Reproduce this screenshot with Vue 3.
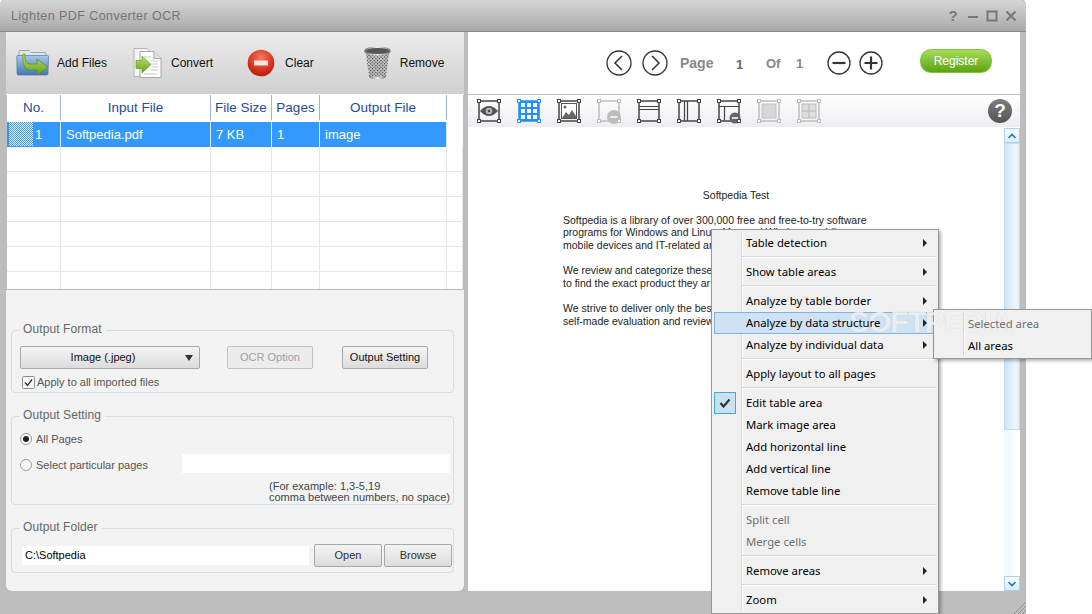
<script setup>
const columns = ['No.', 'Input File', 'File Size', 'Pages', 'Output File', '']
const emptyRows = [1, 2, 3, 4, 5, 6]
const tools = [
  { kind: 'eye', color: '#444' },
  { kind: 'grid', color: '#1e90ff' },
  { kind: 'image', color: '#444' },
  { kind: 'minus', color: '#bdbdbd' },
  { kind: 'rows', color: '#444' },
  { kind: 'cols', color: '#444' },
  { kind: 'rowminus', color: '#444' },
  { kind: 'fill', color: '#bdbdbd' },
  { kind: 'quad', color: '#bdbdbd' }
]
const corners = [[2, 2], [22, 2], [2, 22], [22, 22]]
const menu = [
  { t: 'Table detection', sub: true }, { sep: true },
  { t: 'Show table areas', sub: true }, { sep: true },
  { t: 'Analyze by table border', sub: true },
  { t: 'Analyze by data structure', sub: true, hot: true },
  { t: 'Analyze by individual data', sub: true }, { sep: true },
  { t: 'Apply layout to all pages' }, { sep: true },
  { t: 'Edit table area', check: true },
  { t: 'Mark image area' },
  { t: 'Add horizontal line' },
  { t: 'Add vertical line' },
  { t: 'Remove table line' }, { sep: true },
  { t: 'Split cell', off: true },
  { t: 'Merge cells', off: true }, { sep: true },
  { t: 'Remove areas', sub: true }, { sep: true },
  { t: 'Zoom', sub: true }
]
</script>

<template>
  <div class="screen">
    <div class="window">
      <header class="titlebar">
        <span class="title">Lighten PDF Converter OCR</span>
        <div class="winctl">
          <span class="q">?</span>
          <svg width="14" height="14" viewBox="0 0 14 14"><path d="M2 8h10" stroke="#777" stroke-width="2"/></svg>
          <svg width="14" height="14" viewBox="0 0 14 14"><rect x="2.5" y="2.5" width="9" height="9" fill="none" stroke="#777" stroke-width="2"/></svg>
          <svg width="14" height="14" viewBox="0 0 14 14"><path d="M2.5 2.5l9 9M11.5 2.5l-9 9" stroke="#777" stroke-width="2"/></svg>
        </div>
      </header>

      <div class="body">
        <section class="left">
          <div class="actions">
            <div class="action a1">
              <svg width="34" height="28" viewBox="0 0 34 28">
                <defs>
                  <linearGradient id="fold" x1="0" y1="0" x2="0" y2="1"><stop offset="0" stop-color="#a9c9e6"/><stop offset="1" stop-color="#3f77b5"/></linearGradient>
                  <linearGradient id="grn" x1="0" y1="0" x2="0" y2="1"><stop offset="0" stop-color="#c6e26a"/><stop offset="1" stop-color="#5f9e1e"/></linearGradient>
                </defs>
                <path d="M3 5V2.5Q3 1.5 4 1.5h9l2 2h14q1 0 1 1V8H3z" fill="#dfe6ea" stroke="#8a98a4" stroke-width=".8"/>
                <path d="M1.5 6.5h30q1 0 1 1l-.5 17q0 1.5-1.500 1.500h-28Q1 26 1 24.500L.8 7.500q0-1 .7-1z" fill="url(#fold)" stroke="#55789c" stroke-width=".7"/>
                <path d="M9 5c-.5 7 1 10 6 10h6V10l11 8.500L21 26v-5h-7C8 21 6 14 7 5z" fill="url(#grn)" stroke="#5a8a20" stroke-width=".7"/>
              </svg>
              <span>Add Files</span>
            </div>
            <div class="action a2">
              <svg width="30" height="32" viewBox="0 0 30 32">
                <path d="M1 1.500h13l4 4v24H1z" fill="#f4f4f4" stroke="#b5b5b5"/>
                <path d="M7 4.500h14l7 7v19H7z" fill="#fff" stroke="#a8a8a8"/>
                <path d="M21 4.500v7h7" fill="#e2e2e2" stroke="#a8a8a8"/>
                <path d="M18 14h7M18 17h7M19 20h6M18 23h7M11 10h7M11 27h13" stroke="#c6c6c6"/>
                <path d="M3 13.500h6V9l9 8.500-9 8.500v-4.500H3z" fill="url(#grn)" stroke="#6c9c28" stroke-width=".7"/>
              </svg>
              <span>Convert</span>
            </div>
            <div class="action a3">
              <svg width="28" height="28" viewBox="0 0 28 28">
                <defs><radialGradient id="red" cx=".5" cy=".3" r=".8"><stop offset="0" stop-color="#f07a5e"/><stop offset=".6" stop-color="#d8301c"/><stop offset="1" stop-color="#9c1a0c"/></radialGradient></defs>
                <circle cx="14" cy="14" r="13.300" fill="url(#red)"/>
                <rect x="7" y="11.500" width="14" height="5" fill="#f6e6e0"/>
              </svg>
              <span>Clear</span>
            </div>
            <div class="action a4">
              <svg width="27" height="34" viewBox="0 0 27 34">
                <defs>
                  <pattern id="mesh" width="2.400" height="2.400" patternUnits="userSpaceOnUse" patternTransform="rotate(45)"><rect width="2.400" height="2.400" fill="#c4c4c4"/><rect width="1.200" height="1.200" fill="#3c3c3c"/></pattern>
                  <linearGradient id="rim" x1="0" y1="0" x2="1" y2="0"><stop offset="0" stop-color="#777"/><stop offset=".5" stop-color="#eee"/><stop offset="1" stop-color="#777"/></linearGradient>
                </defs>
                <path d="M1.500 5L5 30q.5 3 8.500 3t8.500-3L25.500 5z" fill="url(#mesh)"/>
                <ellipse cx="13.500" cy="5" rx="12.500" ry="3.800" fill="#555" stroke="url(#rim)" stroke-width="1.500"/>
                <path d="M4.800 29q8.700 4 17.400 0l-.2 1.500q-.5 2.700-8.500 2.700t-8.500-2.700z" fill="url(#rim)"/>
              </svg>
              <span>Remove</span>
            </div>
          </div>

          <div class="table">
            <div class="tr head">
              <div v-for="c in columns" :key="c" class="td">{{ c }}</div>
            </div>
            <div class="tr picked">
              <div class="td no"><i class="hatch"></i><span>1</span></div>
              <div class="td">Softpedia.pdf</div>
              <div class="td">7 KB</div>
              <div class="td">1</div>
              <div class="td">image</div>
              <div class="td blank"></div>
            </div>
            <div v-for="r in emptyRows" :key="r" class="tr empty">
              <div v-for="n in 6" :key="n" class="td"></div>
            </div>
          </div>

          <div class="options">
            <div class="group g1">
              <span class="legend">Output Format</span>
              <div class="row">
                <button class="btn select">Image (.jpeg)<i class="caret"></i></button>
                <button class="btn ocr">OCR Option</button>
                <button class="btn setting">Output Setting</button>
              </div>
              <label class="apply">
                <svg width="13" height="13" viewBox="0 0 13 13"><rect x=".5" y=".5" width="12" height="12" rx="1" fill="#f6f6f6" stroke="#8e8e8e"/><path d="M3 6.500l2.500 3L10 3.500" fill="none" stroke="#333" stroke-width="1.300"/></svg>
                <span>Apply to all imported files</span>
              </label>
            </div>

            <div class="group g2">
              <span class="legend">Output Setting</span>
              <div class="radio r1">
                <i class="dot on"></i><span>All Pages</span>
              </div>
              <div class="radio r2">
                <i class="dot"></i><span class="rlabel">Select particular pages</span><div class="field pages"></div>
              </div>
              <p class="hint">(For example: 1,3-5,19<br>comma between numbers, no space)</p>
            </div>

            <div class="group g3">
              <span class="legend">Output Folder</span>
              <div class="row folder">
                <div class="field path">C:\Softpedia</div>
                <button class="btn open">Open</button>
                <button class="btn browse">Browse</button>
              </div>
            </div>
          </div>
        </section>

        <section class="right">
          <div class="nav">
            <svg class="c1" width="26" height="26" viewBox="0 0 26 26"><circle cx="13" cy="13" r="12" fill="#fff" stroke="#333" stroke-width="1.300"/><path d="M16 6l-7 7 7 7" fill="none" stroke="#333" stroke-width="1.500"/></svg>
            <svg class="c2" width="26" height="26" viewBox="0 0 26 26"><circle cx="13" cy="13" r="12" fill="#fff" stroke="#333" stroke-width="1.300"/><path d="M10 6l7 7-7 7" fill="none" stroke="#333" stroke-width="1.500"/></svg>
            <span class="pg">Page</span>
            <span class="num n1">1</span>
            <span class="pg of">Of</span>
            <span class="num n2">1</span>
            <svg class="c3" width="24" height="24" viewBox="0 0 24 24"><circle cx="12" cy="12" r="11" fill="#fff" stroke="#333" stroke-width="1.300"/><path d="M5.500 12h13" stroke="#333" stroke-width="2.200"/></svg>
            <svg class="c4" width="24" height="24" viewBox="0 0 24 24"><circle cx="12" cy="12" r="11" fill="#fff" stroke="#333" stroke-width="1.300"/><path d="M5.500 12h13M12 5.500v13" stroke="#333" stroke-width="2.200"/></svg>
            <button class="register">Register</button>
          </div>

          <div class="tools">
            <svg v-for="t in tools" :key="t.kind" class="tool" width="26" height="26" viewBox="-1 -1 26 26">
              <rect x="2" y="2" width="20" height="20" fill="none" :stroke="t.color" stroke-width="1.500"/>
              <template v-if="t.kind === 'eye'">
                <path d="M3 12q9-10 18 0q-9 10-18 0z" fill="#555"/>
                <circle cx="12" cy="12" r="3.200" fill="#bbb"/><circle cx="12" cy="12" r="1.300" fill="#444"/>
              </template>
              <template v-else-if="t.kind === 'grid'">
                <rect x="2" y="2" width="20" height="20" fill="#1e90ff"/>
                <path d="M4 4h4v4H4zM10 4h4v4h-4zM16 4h4v4h-4zM4 10h4v4H4zM10 10h4v4h-4zM16 10h4v4h-4zM4 16h4v4H4zM10 16h4v4h-4zM16 16h4v4h-4z" fill="#fff"/>
              </template>
              <template v-else-if="t.kind === 'image'">
                <rect x="4.500" y="4.500" width="15" height="15" fill="#fff" stroke="#555"/>
                <path d="M5 19l4-6 3 3 3-5 4 6v2z" fill="#666"/><circle cx="8" cy="8" r="1.500" fill="#666"/>
              </template>
              <template v-else-if="t.kind === 'rows'">
                <path d="M2 7.500h20M2 10.500h20" :stroke="t.color" stroke-width="1.200"/>
              </template>
              <template v-else-if="t.kind === 'cols'">
                <path d="M7.500 2v20M10.500 2v20" :stroke="t.color" stroke-width="1.200"/>
              </template>
              <template v-else-if="t.kind === 'rowminus'">
                <path d="M2 7.500h20M7.500 7.500v14" :stroke="t.color" stroke-width="1.200"/>
              </template>
              <template v-else-if="t.kind === 'fill'">
                <rect x="5" y="5" width="14" height="14" fill="#d6d6d6" stroke="#c4c4c4"/>
              </template>
              <template v-else-if="t.kind === 'quad'">
                <rect x="5" y="5" width="14" height="14" fill="#dedede" stroke="#bdbdbd"/>
                <path d="M12 5v14M5 12h14" stroke="#b5b5b5"/>
              </template>
              <template v-if="t.kind === 'minus'">
                <circle cx="17" cy="18" r="7" fill="#bcbcbc"/><rect x="13.500" y="17" width="7" height="2" fill="#eee"/>
              </template>
              <template v-if="t.kind === 'rowminus'">
                <circle cx="18" cy="19" r="5.500" fill="#666"/><rect x="15" y="18" width="6" height="2" fill="#ddd"/>
              </template>
              <rect v-for="c in corners" :key="c.join()" :x="c[0] - 1.500" :y="c[1] - 1.500" width="3" height="3" fill="#fff" :stroke="t.color"/>
            </svg>
            <div class="helpball">?</div>
          </div>

          <div class="viewer">
            <article class="doc">
              <h4>Softpedia Test</h4>
              <p>Softpedia is a library of over 300,000 free and free-to-try software<br>programs for Windows and Linux, Mac and Windows mobile<br>mobile devices and IT-related ar</p>
              <p>We review and categorize these<br>to find the exact product they ar</p>
              <p>We strive to deliver only the bes<br>self-made evaluation and review</p>
            </article>
            <div class="scroll">
              <div class="sbtn"><svg width="10" height="8" viewBox="0 0 10 8"><path d="M1.500 6L5 2.500 8.500 6" fill="none" stroke="#2f6fc4" stroke-width="1.600"/></svg></div>
              <div class="thumb"></div>
              <div class="track"></div>
              <div class="sbtn"><svg width="10" height="8" viewBox="0 0 10 8"><path d="M1.500 2L5 5.500 8.500 2" fill="none" stroke="#2f6fc4" stroke-width="1.600"/></svg></div>
            </div>
          </div>
        </section>
      </div>
      <svg class="grip" width="13" height="13" viewBox="0 0 13 13"><path d="M13 1L1 13M13 5L5 13M13 9L9 13" stroke="#8f8f8f"/></svg>
    </div>

    <div class="menu">
      <template v-for="(m, i) in menu" :key="i">
        <div v-if="m.sep" class="sep"></div>
        <div v-else class="mi" :class="{ hot: m.hot, off: m.off }">
          <span v-if="m.check" class="tick">
            <svg width="12" height="10" viewBox="0 0 12 10"><path d="M1.500 5l3 3.500L10.500 1.500" fill="none" stroke="#333" stroke-width="2.200"/></svg>
          </span>
          <span class="lbl">{{ m.t }}</span>
          <i v-if="m.sub" class="arrow"></i>
        </div>
      </template>
    </div>
    <div class="submenu">
      <div class="mi off"><span class="lbl">Selected area</span></div>
      <div class="mi"><span class="lbl">All areas</span></div>
    </div>
    <div class="mark">SOFTPEDIA</div>
  </div>
</template>

<style>
html, body { margin: 0; background: #fff; }
</style>

<style scoped>
.screen {
  position: relative;
  width: 1092px;
  height: 614px;
  overflow: hidden;
  font-family: "Liberation Sans", Arial, sans-serif;
  background: #fff;
}
.window {
  position: relative;
  width: 1026px;
  height: 614px;
  background: #bdbdbd;
  border-radius: 6px 6px 0 0;
  display: flex;
  flex-direction: column;
}
.titlebar {
  height: 31px;
  border-bottom: 1px solid #8a8a8a;
  border-top: 1px solid #bbb;
  box-sizing: content-box;
  margin-top: -1px;
  border-radius: 6px 6px 0 0;
  background: linear-gradient(#d6d6d6, #a9a9a9);
  display: flex;
  align-items: center;
  justify-content: space-between;
  padding: 0 8px 0 11px;
  flex: none;
}
.title { font-size: 12.500px; letter-spacing: .44px; color: #757575; }
.winctl { display: flex; align-items: center; gap: 5px; }
.q { width: 14px; margin-right: 1px; text-align: center; font-size: 15px; font-weight: bold; color: #777; }
.body { display: flex; gap: 4px; padding: 0 6px; height: 559px; flex: none; }

.left { width: 458px; display: flex; flex-direction: column; flex: none; }
.actions {
  height: 62px;
  flex: none;
  background: linear-gradient(#ececec, #cfcfcf);
  border-bottom: 1px solid #fff;
  display: flex;
  align-items: center;
  font-size: 12px;
  color: #111;
}
.action { display: flex; align-items: center; position: relative; }
.action span { display: block; }
.a1 { margin-left: 10px; gap: 7px; }
.a2 { margin-left: 26px; gap: 8px; }
.a3 { margin-left: 34px; gap: 10px; }
.a4 { margin-left: 50px; gap: 9px; }

.table { height: 195px; flex: none; margin: 0 1px; background: #fff; overflow: hidden; border-bottom: 1px solid #b9b9b9; box-sizing: border-box; }
.tr { display: grid; grid-template-columns: 54px 150px 61px 48px 127px 16px; }
.td { box-sizing: border-box; border-right: 1px solid #e6e6e6; }
.head { height: 27px; font-size: 13.500px; color: #1f4b9f; text-align: center; line-height: 25px; }
.head .td { border-right: 1px solid #9fb5d4; height: 25px; padding-top: 0; }
.head .td:last-child { border-right: 0; }
.picked { height: 24px; font-size: 13px; line-height: 25px; color: #fff; }
.picked .td { background: #3399ff; border-right: 1px solid #d9ebff; padding-left: 5px; }
.picked .td.no { display: flex; padding-left: 2px; }
.picked .td.blank { background: #fff; border: 0; }
.hatch {
  width: 24px;
  height: 24px;
  margin-right: 2px;
  background: repeating-conic-gradient(#3399ff 0 25%, #e8f2fc 0 50%) 0 0 / 2px 2px;
}
.empty { height: 25px; border-top: 1px solid #e6e6e6; box-sizing: border-box; }

.options {
  flex: 1;
  background: #f3f3f3;
  border-radius: 0 0 6px 6px;
  padding: 40px 10px 0 5px;
  display: flex;
  flex-direction: column;
  gap: 23px;
  box-sizing: border-box;
  font-size: 11px;
  color: #555;
}
.group { position: relative; border: 1px solid #d4dee8; border-radius: 4px; box-sizing: border-box; }
.legend {
  position: absolute;
  left: 8px;
  top: -9px;
  padding: 0 4px 0 3px;
  background: #f3f3f3;
  font-size: 12px;
  line-height: 15px;
  letter-spacing: .1px;
  color: #666;
}
.g1 { height: 63px; padding: 15px 0 0 8px; }
.g2 { height: 89px; padding: 12px 0 0 8px; }
.g3 { height: 45px; padding: 15px 0 0 10px; }
.row { display: flex; align-items: center; }
.btn {
  height: 23px;
  box-sizing: border-box;
  padding: 0 0 2px;
  border: 1px solid #a8a8a8;
  border-radius: 2px;
  background: linear-gradient(#f4f4f4, #dcdcdc);
  font: 11px "Liberation Sans", Arial, sans-serif;
  color: #111;
  position: relative;
}
.select { width: 180px; padding-right: 14px; }
.caret {
  position: absolute;
  right: 6px;
  top: 8px;
  border: 4px solid transparent;
  border-top: 6px solid #333;
  border-bottom: 0;
}
.ocr { width: 86px; margin-left: 27px; color: #a0a0a0; background: #ececec; border-color: #c0c0c0; }
.setting { width: 86px; margin-left: 29px; }
.apply { display: flex; align-items: center; gap: 2px; height: 14px; margin: 6px 0 0 2px; }
.radio { display: flex; align-items: center; }
.r1 { height: 20px; }
.r2 { height: 19px; margin-top: 5px; }
.dot {
  width: 12px;
  height: 12px;
  box-sizing: border-box;
  border-radius: 50%;
  border: 1px solid #9a9a9a;
  background: #fafafa;
  margin-right: 4px;
  display: flex;
  align-items: center;
  justify-content: center;
}
.r2 .dot, .rlabel { margin-top: 2px; }
.dot.on::after { content: ""; width: 6px; height: 6px; border-radius: 50%; background: #222; }
.rlabel { width: 146px; white-space: nowrap; }
.field { background: #fff; }
.pages { width: 268px; height: 19px; }
.hint { margin: 8px 0 0 249px; font-size: 11px; line-height: 11px; white-space: nowrap; color: #444; }
.path { width: 287px; height: 19px; box-sizing: border-box; padding-left: 3px; line-height: 18px; color: #000; }
.open { width: 68px; margin-left: 5px; color: #333; }
.browse { width: 68px; margin-left: 2px; color: #333; }

.right { width: 552px; flex: none; display: flex; flex-direction: column; background: #fff; }
.nav { height: 62px; flex: none; display: flex; align-items: center; padding-left: 138px; }
.c2 { margin-left: 10px; }
.pg { font-size: 14px; font-weight: bold; color: #888; margin-left: 12px; width: 33px; }
.num { font-size: 13px; font-weight: bold; color: #666; margin-top: 3px; }
.n1 { margin-left: 23px; width: 7px; }
.pg.of { margin-left: 23px; width: 14px; font-size: 13px; }
.n2 { margin-left: 16px; width: 7px; margin-top: 0; color: #888; }
.c3 { margin-left: 24px; }
.c4 { margin-left: 8px; }
.register {
  margin: 0 0 4px 37px;
  width: 72px;
  height: 24px;
  padding: 0;
  border: 1px solid #86c440;
  border-radius: 11px;
  background: linear-gradient(#a4dc56, #5ea214);
  color: #fff;
  font: 12px "Liberation Sans", Arial, sans-serif;
}
.tools {
  height: 32px;
  flex: none;
  border-top: 1px solid #bdbdbd;
  background: linear-gradient(#fff, #eeecf3);
  display: flex;
  align-items: center;
  gap: 14px;
  padding-left: 8px;
  box-sizing: content-box;
  position: relative;
}
.tool { flex: none; }
.helpball {
  flex: none;
  width: 24px;
  height: 24px;
  margin-left: 152px;
  border-radius: 50%;
  background: linear-gradient(#7d7d7d, #555);
  color: #fff;
  font-size: 19px;
  font-weight: bold;
  line-height: 24px;
  text-align: center;
}
.viewer { flex: 1; min-height: 0; display: flex; justify-content: space-between; }
.doc { width: 340px; margin: 62px 0 0 95px; font-size: 10.500px; line-height: 12.660px; color: #222; white-space: nowrap; }
.doc h4 { margin: 0; font-weight: normal; text-align: center; width: 346px; }
.doc p { margin: 12.500px 0 0; }
.doc h4 + p { margin-top: 12px; }
.scroll { width: 16px; margin-right: 0; padding-top: 1px; display: flex; flex-direction: column; background: linear-gradient(90deg, #f2f8fc, #fff); }
.sbtn { height: 15px; flex: none; box-sizing: border-box; border: 1px solid #a8d2f0; background: linear-gradient(#f8fcff, #d8ecfa); display: flex; align-items: center; justify-content: center; }
.thumb { height: 287px; flex: none; box-sizing: border-box; border: 1px solid #bedcf2; background: linear-gradient(90deg, #cbe5f8, #eef7fe 75%, #e2f0fb); }
.track { flex: 1; }
.grip { position: absolute; right: 0; bottom: 0; }

.menu, .submenu {
  position: absolute;
  box-sizing: border-box;
  background: #f0f0f0;
  border: 1px solid #979797;
  box-shadow: 2px 2px 3px rgba(0, 0, 0, .3);
  font-family: "Noto Sans", sans-serif;
  font-size: 11.300px;
  color: #000;
}
.menu { left: 711px; top: 229px; width: 228px; height: 385px; padding: 2px 2px; }
.menu::before {
  content: "";
  position: absolute;
  left: 29px;
  top: 3px;
  bottom: 3px;
  border-left: 1px solid #d8d8d8;
  border-right: 1px solid #fff;
}
.mi { position: relative; height: 22px; line-height: 21px; padding-left: 32px; white-space: nowrap; box-sizing: border-box; }
.lbl { position: relative; z-index: 2; }
.mi.off { color: #6f6f6f; }
.mi.hot { background: #cfe2f3; outline: 1px solid #7fb2e5; outline-offset: -1px; }
.sep { height: 7px; margin-left: 28px; position: relative; }
.sep::after { content: ""; position: absolute; left: 0; right: 0; top: 2px; height: 1px; background: #d6d6d6; border-bottom: 1px solid #fff; }
.arrow {
  position: absolute;
  right: 9px;
  top: 7px;
  border: 4px solid transparent;
  border-left: 4px solid #222;
  border-right: 0;
}
.tick {
  position: absolute;
  left: 0;
  top: 0;
  width: 22px;
  height: 22px;
  box-sizing: border-box;
  border: 1px solid #3fa9dc;
  background: #c9e0f0;
  display: flex;
  align-items: center;
  justify-content: center;
}
.submenu { left: 933px; top: 309px; width: 159px; height: 50px; padding: 3px 0 0 34px; }
.submenu .mi { padding-left: 0; }
.submenu::before {
  content: "";
  position: absolute;
  left: 29px;
  top: 3px;
  bottom: 3px;
  border-left: 1px solid #d8d8d8;
  border-right: 1px solid #fff;
}
.mark {
  position: absolute;
  z-index: 1;
  left: 849px;
  top: 305px;
  font-size: 30px;
  font-weight: bold;
  letter-spacing: -1px;
  color: rgba(255, 255, 255, .72);
  text-shadow: 0 0 1px rgba(120, 120, 120, .3);
  pointer-events: none;
}
</style>
